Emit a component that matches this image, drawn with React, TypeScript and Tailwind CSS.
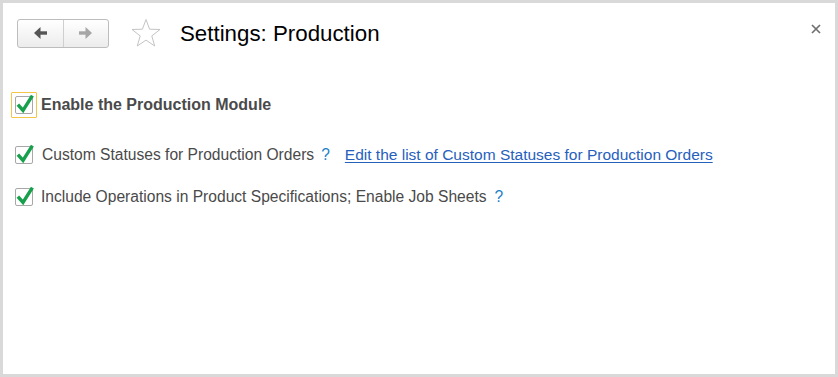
import React from "react";

function Check() {
  return (
    <svg width="22" height="24" viewBox="0 0 22 24" className="absolute left-[-1px] top-[-5px]">
      <path d="M4 14 L8 18.5 L16.5 5" fill="none" stroke="#17a04b" strokeWidth="3.4" strokeLinecap="square" strokeLinejoin="miter" />
    </svg>
  );
}

function Box() {
  return (
    <div className="relative w-[18px] h-[18px] border border-[#a8a8a8] rounded-[2px] bg-white shrink-0">
      <Check />
    </div>
  );
}

function Arrow({ dir, color }: { dir: "left" | "right"; color: string }) {
  return (
    <svg width="13" height="12" viewBox="0 0 13 12" style={{ transform: dir === "right" ? "scaleX(-1)" : undefined }}>
      <polygon points="0,6 6.5,0 6.5,12" fill={color} />
      <rect x="5" y="4.3" width="8" height="3.4" fill={color} />
    </svg>
  );
}

export default function App() {
  return (
    <div
      className="w-[838px] h-[377px] border-[3px] border-[#d9d9d9] bg-white box-border text-[#404040]"
      style={{ fontFamily: '"Liberation Sans", Arial, sans-serif' }}
    >
      <div className="flex items-center pl-[14px] pt-[15px] pr-[14px]">
        <div className="flex h-[29px] w-[92px] rounded-[3px] border border-[#bdbdbd] bg-gradient-to-b from-white to-[#ececec] overflow-hidden">
          <div className="flex-1 flex items-center justify-center border-r border-[#cfcfcf]">
            <Arrow dir="left" color="#555555" />
          </div>
          <div className="flex-1 flex items-center justify-center">
            <Arrow dir="right" color="#a6a6a6" />
          </div>
        </div>
        <svg width="32" height="30" viewBox="0 0 32 30" className="ml-[21px]">
          <polygon
            points="16,1.5 19.6,11.2 30,11.5 21.8,17.9 24.7,28 16,22.1 7.3,28 10.2,17.9 2,11.5 12.4,11.2"
            fill="none"
            stroke="#c4c4c4"
            strokeWidth="1"
          />
        </svg>
        <div className="ml-[18px] text-[22.3px] leading-[29px] text-black">Settings: Production</div>
        <div className="ml-auto mt-[-9px] mr-0">
          <svg width="10" height="10" viewBox="0 0 10 10">
            <path d="M1 1 L9 9 M9 1 L1 9" stroke="#707070" strokeWidth="1.7" />
          </svg>
        </div>
      </div>

      <div className="pl-[8px] mt-[44px] flex items-center">
        <div className="border border-[#f3c647] p-[3px] rounded-[1px]">
          <Box />
        </div>
        <div className="ml-[4px] text-[16px] font-bold text-[#4a4a4a]">Enable the Production Module</div>
      </div>

      <div className="pl-[12px] mt-[27px] flex items-center h-[20px]">
        <Box />
        <div className="ml-[9px] text-[15.6px] text-[#4a4a4a]">Custom Statuses for Production Orders</div>
        <div className="ml-[7px] text-[15.6px] text-[#1d7fc6]">?</div>
        <a href="#" className="ml-[15px] text-[15.5px] text-[#2660bd] underline underline-offset-[2px]">
          Edit the list of Custom Statuses for Production Orders
        </a>
      </div>

      <div className="pl-[12px] mt-[22px] flex items-center h-[20px]">
        <Box />
        <div className="ml-[8px] text-[15.6px] text-[#4a4a4a]">Include Operations in Product Specifications; Enable Job Sheets</div>
        <div className="ml-[8px] text-[15.6px] text-[#1d7fc6]">?</div>
      </div>
    </div>
  );
}
